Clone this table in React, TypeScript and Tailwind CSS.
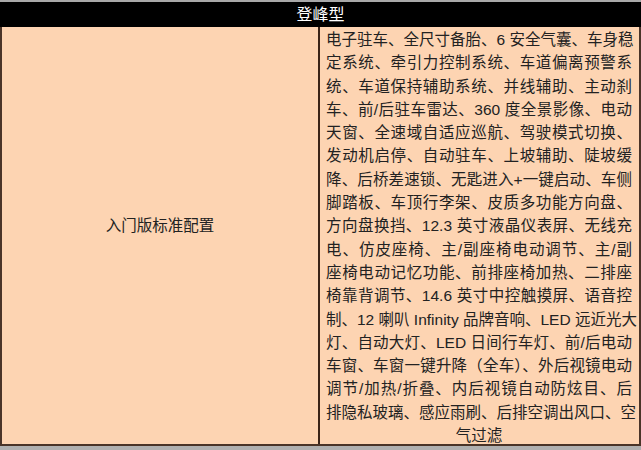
import React from 'react';

const lines = [
  '电子驻车、全尺寸备胎、6 安全气囊、车身稳',
  '定系统、牵引力控制系统、车道偏离预警系',
  '统、车道保持辅助系统、并线辅助、主动刹',
  '车、前/后驻车雷达、360 度全景影像、电动',
  '天窗、全速域自适应巡航、驾驶模式切换、',
  '发动机启停、自动驻车、上坡辅助、陡坡缓',
  '降、后桥差速锁、无匙进入+一键启动、车侧',
  '脚踏板、车顶行李架、皮质多功能方向盘、',
  '方向盘换挡、12.3 英寸液晶仪表屏、无线充',
  '电、仿皮座椅、主/副座椅电动调节、主/副',
  '座椅电动记忆功能、前排座椅加热、二排座',
  '椅靠背调节、14.6 英寸中控触摸屏、语音控',
  '制、12 喇叭 Infinity 品牌音响、LED 远近光大',
  '灯、自动大灯、LED 日间行车灯、前/后电动',
  '车窗、车窗一键升降（全车）、外后视镜电动',
  '调节/加热/折叠、内后视镜自动防炫目、后',
  '排隐私玻璃、感应雨刷、后排空调出风口、空',
];

const font = { fontFamily: '"Liberation Sans", "Noto Sans CJK SC", sans-serif' };

export default function App() {
  return (
    <div className="w-[641px] h-[450px] bg-white overflow-hidden" style={font}>
      <div className="h-[2px] bg-[#a8a8a8]" />
      <div className="h-[25px] bg-black text-white text-[16px] flex items-center justify-center leading-none">
        登峰型
      </div>
      <div className="h-[419px] flex bg-[#fdd4b2] border-l-2 border-r-2 border-b-2 border-[#4a3428] text-[#222]">
        <div className="w-[318px] border-r-2 border-[#3a2418] flex items-center justify-center pb-[20px] text-[15.5px]">
          入门版标准配置
        </div>
        <div className="flex-1 overflow-hidden pl-[6px] pr-[7px] pt-[1px] text-[15.5px] leading-[23.3px]">
          {lines.map((l, i) => (
            <div key={i} className="text-justify [text-align-last:justify] whitespace-nowrap">
              {l}
            </div>
          ))}
          <div className="text-center">气过滤</div>
        </div>
      </div>
      <div className="h-[4px] bg-[#b0b0b0]" />
    </div>
  );
}
